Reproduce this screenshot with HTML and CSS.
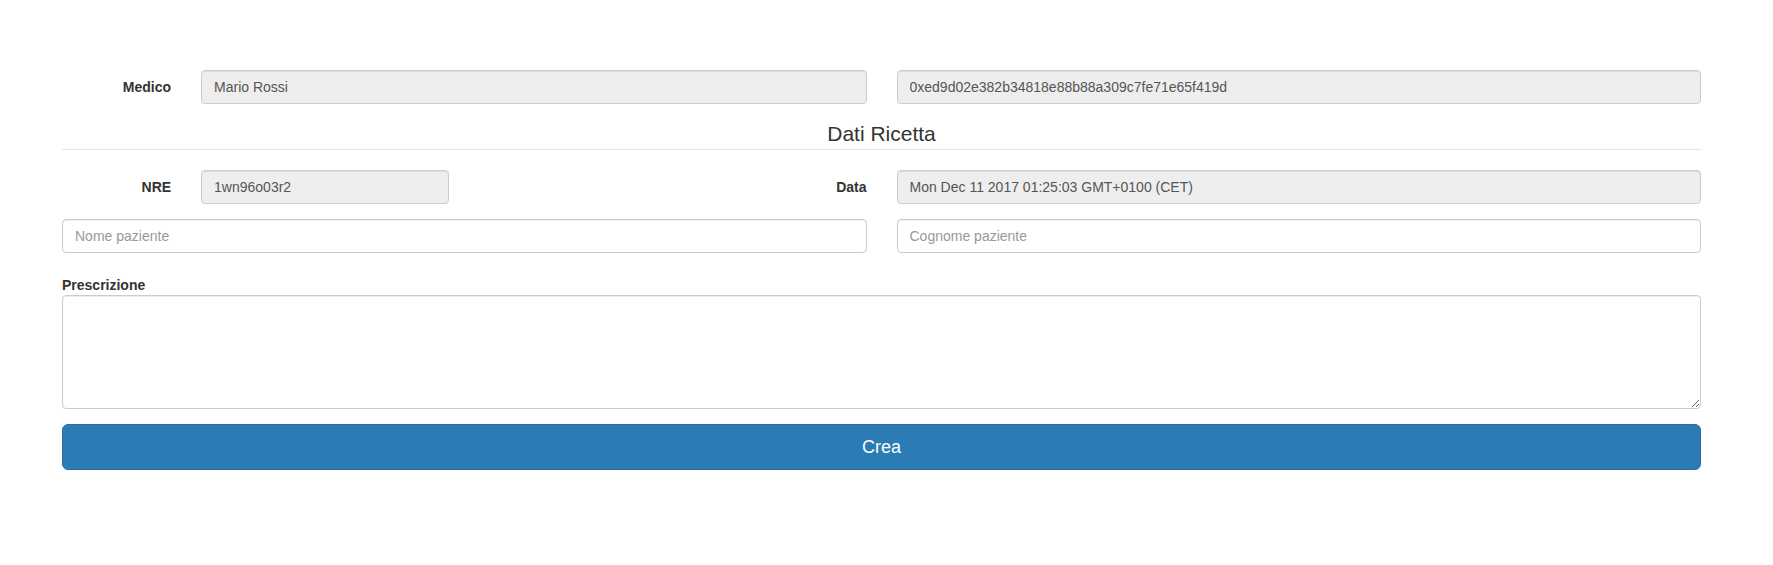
FILE: index.html
```html
<!DOCTYPE html>
<html lang="it">
<head>
<meta charset="utf-8">
<title>Ricetta</title>
<link rel="stylesheet" href="styles.css">
</head>
<body>
<div class="container">
  <form class="form">
    <div class="row">
      <label class="control-label span-1">Medico</label>
      <div class="span-5"><input class="form-control" type="text" value="Mario Rossi" readonly></div>
      <div class="span-6"><input class="form-control" type="text" value="0xed9d02e382b34818e88b88a309c7fe71e65f419d" readonly></div>
    </div>
    <div class="legend">Dati Ricetta</div>
    <div class="row">
      <label class="control-label span-1">NRE</label>
      <div class="span-2"><input class="form-control" type="text" value="1wn96o03r2" readonly></div>
      <label class="control-label span-3">Data</label>
      <div class="span-6"><input class="form-control" type="text" value="Mon Dec 11 2017 01:25:03 GMT+0100 (CET)" readonly></div>
    </div>
    <div class="row">
      <div class="span-6"><input class="form-control" type="text" placeholder="Nome paziente"></div>
      <div class="span-6"><input class="form-control" type="text" placeholder="Cognome paziente"></div>
    </div>
    <div class="group">
      <label class="field-label">Prescrizione</label>
      <textarea class="form-control textarea" rows="5"></textarea>
    </div>
    <button type="button" class="btn-primary">Crea</button>
  </form>
</div>
</body>
</html>
```

FILE: styles.css
```css
* {
  box-sizing: border-box;
}

html, body {
  margin: 0;
  padding: 0;
  background: #fff;
}

body {
  font-family: "Liberation Sans", Arial, Helvetica, sans-serif;
  font-size: 14px;
  line-height: 20px;
  color: #333;
}

.container {
  margin: 0 72px 0 62px;
  padding-top: 70px;
}

.row {
  display: grid;
  grid-template-columns: repeat(12, 1fr);
  column-gap: 30px;
  margin-bottom: 15px;
}

.span-1 { grid-column: span 1; }
.span-2 { grid-column: span 2; }
.span-3 { grid-column: span 3; }
.span-5 { grid-column: span 5; }
.span-6 { grid-column: span 6; }

.control-label {
  font-weight: bold;
  text-align: right;
  padding-top: 7px;
}

.form-control {
  display: block;
  width: 100%;
  height: 34px;
  padding: 6px 12px;
  font-family: inherit;
  font-size: 14px;
  line-height: 20px;
  color: #555;
  background: #fff;
  border: 1px solid #ccc;
  border-radius: 4px;
  box-shadow: inset 0 1px 1px rgba(0, 0, 0, 0.075);
  outline: none;
  margin: 0;
}

.form-control[readonly] {
  background: #eee;
}

.form-control::placeholder {
  color: #999;
}

.legend {
  font-size: 21px;
  line-height: 30px;
  text-align: center;
  color: #333;
  border-bottom: 1px solid #e5e5e5;
  margin-bottom: 20px;
}

.group {
  margin-bottom: 15px;
  padding-top: 7px;
}

.field-label {
  display: block;
  font-weight: bold;
  margin-bottom: 0;
}

.textarea {
  height: 114px;
  resize: vertical;
}

.btn-primary {
  display: block;
  width: 100%;
  height: 46px;
  padding: 10px 16px;
  font-family: inherit;
  font-size: 18px;
  line-height: 24px;
  color: #fff;
  background: #2b7bb5;
  border: 1px solid #2e6da4;
  border-radius: 6px;
  cursor: pointer;
}
```
